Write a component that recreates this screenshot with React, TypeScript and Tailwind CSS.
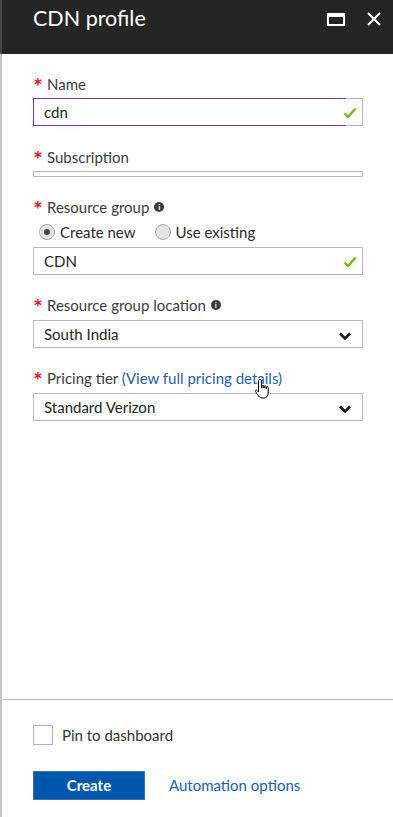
import { ReactNode } from "react";

const font = { fontFamily: "Lato, 'Noto Sans', sans-serif" };

const Label = ({ children, info }: { children: ReactNode; info?: boolean }) => (
  <div className="flex items-center h-5 text-[15px] text-[#3c3c3c]">
    <span
      className="text-[#e81123] w-[14px] pl-[1px] text-[15px] font-bold leading-none mt-[2px]"
      style={{ fontFamily: "'DejaVu Sans', sans-serif" }}
    >
      *
    </span>
    <span>{children}</span>
    {info && (
      <span className="ml-[5px] w-[10px] h-[10px] rounded-full bg-[#3a3a3a] text-white text-[8px] font-bold leading-none flex items-center justify-center">
        i
      </span>
    )}
  </div>
);

const Check = () => (
  <svg width="14" height="12" viewBox="0 0 14 12" className="absolute right-[5px] top-[8px]">
    <path d="M1.5 6.5 L5 10 L12.5 1.5" stroke="#7ab800" strokeWidth="2.4" fill="none" />
  </svg>
);

const Chevron = () => (
  <svg width="14" height="10" viewBox="0 0 14 10" className="absolute right-[10px] top-[10px]">
    <path d="M2 2.5 L7 7.5 L12 2.5" stroke="#1a1a1a" strokeWidth="2.6" fill="none" />
  </svg>
);

const Radio = ({ on, label }: { on?: boolean; label: string }) => (
  <div className="flex items-center gap-[5px]">
    <span className="w-4 h-4 rounded-full border border-[#a8a8a8] bg-[#e3e3e3] flex items-center justify-center">
      {on && <span className="w-[6px] h-[6px] rounded-full bg-[#444]" />}
    </span>
    <span className="text-[15px] text-[#2b2b2b]">{label}</span>
  </div>
);

export default function App() {
  return (
    <div className="w-[393px] h-[817px] flex flex-col bg-white" style={font}>
      {/* Header */}
      <div className="h-[54px] shrink-0 bg-[#252525] border-l-2 border-[#474747] flex items-start justify-between pl-[31px] pr-[12px]">
        <span className="text-white text-[21.5px] leading-none mt-[8px]">CDN profile</span>
        <div className="flex items-center gap-[22px] mt-[12px]">
          <span className="w-[18px] h-[13px] border-2 border-t-[4px] border-white" />
          <svg width="14" height="14" viewBox="0 0 14 14">
            <path d="M1 1 L13 13 M13 1 L1 13" stroke="white" strokeWidth="2" />
          </svg>
        </div>
      </div>

      <div className="flex-1 flex flex-col border-l-2 border-[#c6c6c6]">
        {/* Form */}
        <div className="flex-1 px-[31px] pt-5">
          <Label>Name</Label>
          <div className="relative mt-1 h-[28px] w-[330px] border border-[#bababa] text-[15px] text-[#1e1e1e] flex items-center pl-[10px]">
            <span className="absolute -left-px -top-px -bottom-px w-[313px] border border-r-0 border-[#8a2da6]" />
            <span className="relative">cdn</span>
            <Check />
          </div>

          <div className="mt-[21px]">
            <Label>Subscription</Label>
          </div>
          <div className="mt-1 h-[6px] w-[330px] border border-[#bababa]" />

          <div className="mt-5">
            <Label info>Resource group</Label>
          </div>
          <div className="flex items-center gap-[19px] pl-[6px] mt-[5px] h-5">
            <Radio on label="Create new" />
            <Radio label="Use existing" />
          </div>
          <div className="relative mt-[5px] h-[28px] w-[330px] border border-[#bababa] text-[15px] text-[#1e1e1e] flex items-center pl-[10px]">
            <span>CDN</span>
            <Check />
          </div>

          <div className="mt-5">
            <Label info>Resource group location</Label>
          </div>
          <div className="relative mt-[5px] h-[28px] w-[330px] border border-[#bababa] text-[15px] text-[#1e1e1e] flex items-center pl-[10px]">
            <span>South India</span>
            <Chevron />
          </div>

          <div className="mt-5 relative">
            <Label>
              Pricing tier&nbsp;<span className="text-[#1f5fa8]">(View full pricing details)</span>
            </Label>
            <svg width="20" height="24" viewBox="0 0 20 24" className="absolute left-[221px] top-[10px] z-10">
              <path
                d="M6 1.5 C7 1.5 7.5 2 7.5 3 L7.5 10 L8 10 L8 8 C8 7 9.8 7 9.8 8 L9.8 10 L10.2 10 L10.2 8.5 C10.2 7.5 12 7.5 12 8.5 L12 10.5 L12.4 10.5 L12.4 9.5 C12.4 8.5 14.2 8.5 14.2 9.5 L14.2 15 C14.2 18 12.5 20 10 20 L8 20 C6 20 5 18.5 3.5 16.5 L1.5 13.5 C1 12.5 2.3 11.5 3.2 12.5 L4.5 14 L4.5 3 C4.5 2 5 1.5 6 1.5 Z"
                fill="white"
                stroke="black"
                strokeWidth="1"
              />
            </svg>
          </div>
          <div className="relative mt-[5px] h-[28px] w-[330px] border border-[#bababa] text-[15px] text-[#1e1e1e] flex items-center pl-[10px]">
            <span>Standard Verizon</span>
            <Chevron />
          </div>
        </div>

        {/* Footer */}
        <div className="shrink-0 h-[118px] border-t border-[#c2c2c2] px-[31px]">
          <div className="flex items-center mt-[25px] h-5">
            <span className="w-5 h-5 border border-[#b4b4b4]" />
            <span className="ml-[9px] text-[15px] text-[#333]">Pin to dashboard</span>
          </div>
          <div className="flex items-center mt-[26px]">
            <button className="w-[112px] h-[29px] bg-[#0058ad] border border-[#3b73b5] text-white text-[15px] font-bold">
              Create
            </button>
            <span className="ml-[24px] text-[15px] text-[#1660b5]">Automation options</span>
          </div>
        </div>
      </div>
    </div>
  );
}
